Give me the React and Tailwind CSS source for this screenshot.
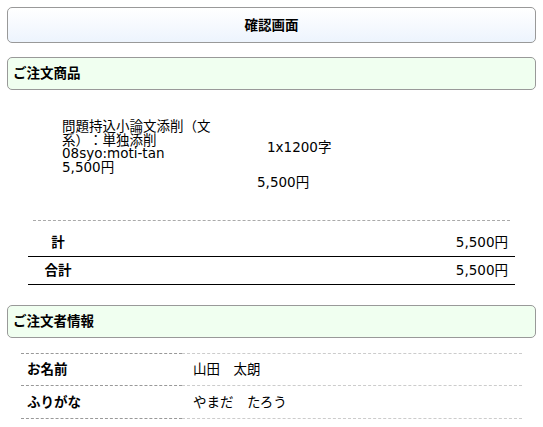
const font = { fontFamily: '"DejaVu Sans", "Noto Sans CJK JP", sans-serif' };

const infoRows = [
  { label: "お名前", value: "山田　太朗" },
  { label: "ふりがな", value: "やまだ　たろう" },
];

const App = () => {
  return (
    <div
      className="p-[7px] text-[13.5px] text-black bg-white min-h-screen [text-spacing-trim:space-all]"
      style={font}
    >
      {/* Title */}
      <div className="h-[36px] border border-[#999] rounded-[5px] bg-gradient-to-b from-white to-[#edf4fd] flex items-center justify-center font-bold">
        確認画面
      </div>

      {/* Order items header */}
      <div className="mt-[14px] h-[33px] border border-[#999] rounded-[5px] bg-[#f0fff0] flex items-center px-[5px] font-bold">
        ご注文商品
      </div>

      {/* Item */}
      <div className="pt-[28px] leading-[14px]">
        <div className="flex ml-[55px]">
          <div className="w-[155px]">
            <div className="font-['Noto_Sans_CJK_JP',sans-serif]">
              問題持込小論文添削（文系）：単独添削
            </div>
            <div>08syo:moti-tan</div>
            <div>5,500円</div>
          </div>
          <div className="self-center ml-[50px] pt-[1px]">1x1200字</div>
        </div>
        <div className="pl-[250px] pt-[1px]">5,500円</div>
      </div>

      <div className="mt-[31px] mx-[26px] border-t border-dashed border-[#aaa]" />

      {/* Totals */}
      <div className="mt-[8px] mx-[21px]">
        <div className="flex items-center h-[28px] border-b border-black">
          <div className="w-[60px] text-center font-bold">計</div>
          <div className="ml-auto pr-[7px]">5,500円</div>
        </div>
        <div className="flex items-center h-[28px] border-b border-black">
          <div className="w-[60px] text-center font-bold">合計</div>
          <div className="ml-auto pr-[7px]">5,500円</div>
        </div>
      </div>

      {/* Customer header */}
      <div className="mt-[20px] h-[33px] border border-[#999] rounded-[5px] bg-[#f0fff0] flex items-center px-[5px] font-bold">
        ご注文者情報
      </div>

      {/* Customer info */}
      <div className="mt-[15px] mx-[14px]">
        {infoRows.map((row, i) => (
          <div key={row.label} className="flex h-[33px]">
            <div
              className={`w-[161px] flex items-center pl-[6px] font-bold border-b border-dashed border-[#999] ${
                i === 0 ? "border-t" : ""
              }`}
            >
              {row.label}
            </div>
            <div
              className={`flex-1 flex items-center pl-[11px] border-b border-dashed border-[#ccc] ${
                i === 0 ? "border-t" : ""
              }`}
            >
              {row.value}
            </div>
          </div>
        ))}
      </div>
    </div>
  );
};

export default App;
